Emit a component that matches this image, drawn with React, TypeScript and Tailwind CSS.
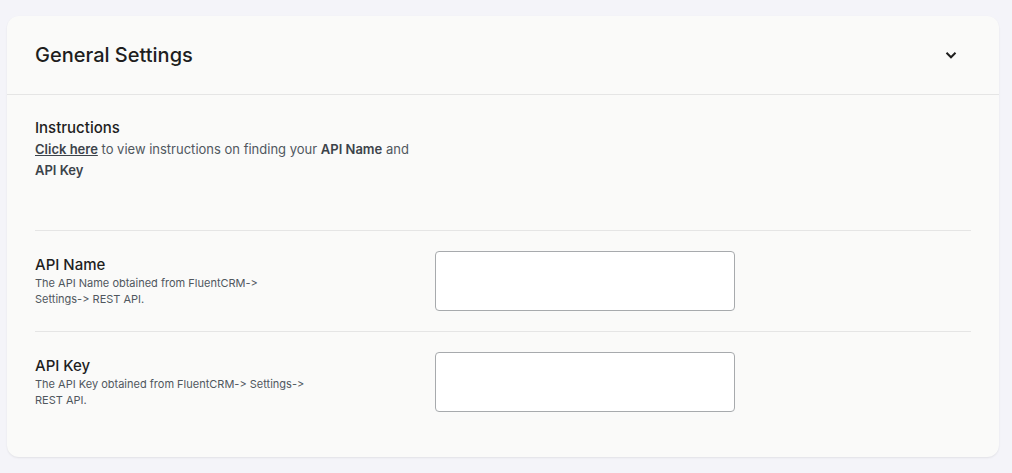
import { useState } from 'react'

const fields = [
  { id: 'api_name', label: 'API Name', help: 'The API Name obtained from FluentCRM-> Settings-> REST API.', width: 'max-w-[235px]' },
  { id: 'api_key', label: 'API Key', help: 'The API Key obtained from FluentCRM-> Settings-> REST API.', width: 'max-w-[275px]' },
]

export default function App() {
  const [values, setValues] = useState<Record<string, string>>({ api_name: '', api_key: '' })

  return (
    <div className="min-h-[473px] bg-[#f4f4f9] pt-[16px] pl-[7px] pr-[13px] font-['Inter',sans-serif] [font-feature-settings:'calt'_0]">
      <div className="rounded-xl bg-[#fafaf9] shadow-[0_1px_2px_rgba(0,0,0,0.08)]">
        <div className="flex h-[79px] items-center justify-between border-b border-[#e5e5e5] pl-[28px] pr-[42px]">
          <h2 className="text-[20px] font-medium text-[#1e1e1e]">General Settings</h2>
          <svg width="12" height="8" viewBox="0 0 12 8" fill="none" className="text-[#1e1e1e]">
            <path d="M1.5 1.75 6 6.25l4.5-4.5" stroke="currentColor" strokeWidth="2" />
          </svg>
        </div>

        <div className="px-[28px] pt-[22px] pb-[25px]">
          <div className="border-b border-[#e5e5e5] pb-[49px]">
            <h3 className="text-[15px] font-medium leading-[22px] text-[#1e1e1e]">Instructions</h3>
            <p className="max-w-[380px] text-[13px] leading-[21px] text-[#50575e]">
              <a href="#" className="font-semibold text-[#3c434a] underline">Click here</a> to view instructions on finding your <strong className="font-semibold text-[#3c434a]">API Name</strong> and <strong className="font-semibold text-[#3c434a]">API Key</strong>
            </p>
          </div>

          {fields.map((f, i) => (
            <div
              key={f.id}
              className={`flex items-center py-[20px] ${i < fields.length - 1 ? 'border-b border-[#e5e5e5]' : ''}`}
            >
              <div className="w-[400px] shrink-0">
                <label htmlFor={f.id} className="block text-[15px] font-medium leading-[20px] text-[#1e1e1e]">{f.label}</label>
                <p className={`${f.width} text-[11px] leading-[16px] text-[#50575e]`}>{f.help}</p>
              </div>
              <input
                id={f.id}
                value={values[f.id]}
                onChange={(e) => setValues({ ...values, [f.id]: e.target.value })}
                className="h-[60px] w-[300px] rounded border border-[#a7aaad] bg-white px-3 text-sm outline-none"
              />
            </div>
          ))}
        </div>
      </div>
    </div>
  )
}
